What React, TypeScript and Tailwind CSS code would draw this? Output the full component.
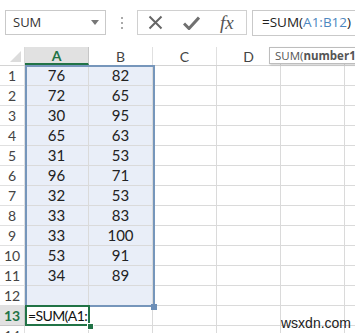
import React from "react";

const data: [number, number][] = [
  [76, 82],
  [72, 65],
  [30, 95],
  [65, 63],
  [31, 53],
  [96, 71],
  [32, 53],
  [33, 83],
  [33, 100],
  [53, 91],
  [34, 89],
];

const cols = ["A", "B", "C", "D", "E", "F"];

function Cell({ children, selected }: { children?: React.ReactNode; selected?: boolean }) {
  return (
    <div
      className={`w-[64px] h-[20px] shrink-0 border-r border-b border-[#dadada] flex items-center justify-center text-[15px] text-[#222] ${
        selected ? "bg-[#e9eef8]" : "bg-white"
      }`}
    >
      {children}
    </div>
  );
}

export default function App() {
  const rows = Array.from({ length: 14 }, (_, i) => i + 1);

  return (
    <div className="relative w-[355px] h-[333px] overflow-hidden bg-white font-['Lato','Noto_Sans',sans-serif]">
      {/* formula bar */}
      <div className="flex items-center pt-[10px] pl-[5px] h-[35px]">
        <div className="w-[101px] h-[25px] border border-[#c9c9c9] flex items-center justify-between pl-[7px] pr-[6px] font-['Open_Sans',sans-serif] text-[13px] text-[#333]">
          <span>SUM</span>
          <svg width="8" height="5" viewBox="0 0 8 5">
            <path d="M0 0h8L4 5z" fill="#777" />
          </svg>
        </div>
        <div className="w-[31px] flex flex-col items-center gap-[3px]">
          <span className="w-[2px] h-[2px] bg-[#aaa]" />
          <span className="w-[2px] h-[2px] bg-[#aaa]" />
          <span className="w-[2px] h-[2px] bg-[#aaa]" />
        </div>
        <div className="w-[110px] h-[25px] border border-[#d0d0d0] flex items-center pl-[10px] gap-[20px]">
          <svg width="15" height="15" viewBox="0 0 15 15">
            <path d="M1.5 1.5l12 12M13.5 1.5l-12 12" stroke="#666" strokeWidth="2" />
          </svg>
          <svg width="17" height="14" viewBox="0 0 17 14">
            <path d="M1 7.5l5 5L16 1.5" stroke="#707070" strokeWidth="3" fill="none" />
          </svg>
          <span className="font-['Liberation_Serif',serif] italic text-[19px] text-[#555] leading-none">fx</span>
        </div>
        <div className="ml-[5px] flex-1 h-[26px] border-y border-l border-[#c9c9c9] flex items-center pl-[9px] font-['Open_Sans',sans-serif] text-[13.5px] text-[#222]">
          =SUM(<span className="text-[#4d87c0]">A1:B12</span>)
        </div>
      </div>

      {/* grid */}
      <div className="mt-[12px]">
        <div className="flex h-[19px] border-b border-[#d4d4d4]">
          <div className="w-[25px] shrink-0 border-r border-[#dadada] flex items-end justify-end p-[3px]">
            <svg width="11" height="11" viewBox="0 0 11 11">
              <path d="M11 0v11H0z" fill="#dcdcdc" />
            </svg>
          </div>
          {cols.map((c) => (
            <div
              key={c}
              className={`w-[64px] shrink-0 flex items-center justify-center text-[14px] border-r ${
                c === "A"
                  ? "bg-[#e1e1e1] text-[#217346] font-bold border-b-2 border-b-[#217346] border-r-[#c6c6c6]"
                  : "text-[#444] border-[#e0e0e0]"
              }`}
            >
              {c}
            </div>
          ))}
        </div>
        {rows.map((r) => (
          <div key={r} className="flex">
            <div
              className={`w-[25px] h-[20px] shrink-0 flex items-center justify-center text-[14px] border-b border-r ${
                r === 13
                  ? "bg-[#e1e1e1] text-[#217346] font-bold border-[#c6c6c6]"
                  : "text-[#444] border-[#e0e0e0]"
              }`}
            >
              {r}
            </div>
            {cols.map((c, ci) => {
              const sel = r <= 12 && ci < 2;
              const v = r <= 11 && ci < 2 ? data[r - 1][ci] : null;
              return (
                <Cell key={c} selected={sel}>
                  {v}
                </Cell>
              );
            })}
          </div>
        ))}
      </div>

      {/* reference highlight A1:B12 */}
      <div className="absolute left-[25px] top-[65px] w-[130px] h-[242px] border-2 border-[#7696bb] pointer-events-none" />
      <div className="absolute left-[151px] top-[304px] w-[6px] h-[6px] bg-[#6d8fb8]" />

      {/* active cell A13 */}
      <div className="absolute left-[25px] top-[305px] w-[65px] h-[21px] border-2 border-[#217346] bg-white flex items-center pl-[1px] text-[14px] tracking-[-0.6px] text-[#111] whitespace-nowrap overflow-visible">
        =SUM(A1:
      </div>
      <div className="absolute left-[87px] top-[323px] w-[5px] h-[5px] bg-[#217346] border border-white box-content" />

      {/* tooltip */}
      <div className="absolute left-[269px] top-[47px] h-[17px] pl-[5px] pr-[10px] border border-[#bdbdbd] bg-white shadow-[1px_1px_2px_rgba(0,0,0,0.2)] flex items-center font-['Open_Sans',sans-serif] text-[11.5px] text-[#555] whitespace-nowrap">
        SUM(<span className="font-bold">number1</span>
      </div>

      {/* watermark */}
      <div className="absolute left-[281px] top-[313px] font-['Liberation_Sans',sans-serif] text-[14px] text-[#222]">
        wsxdn.com
      </div>
    </div>
  );
}
